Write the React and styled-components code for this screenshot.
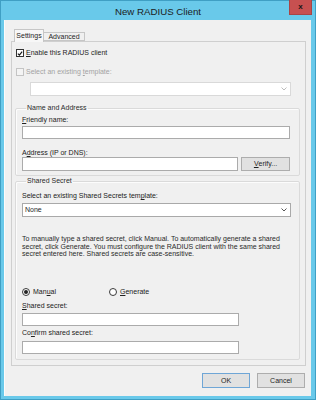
import styled, { createGlobalStyle } from 'styled-components';

const GlobalStyle = createGlobalStyle`
  html, body {
    margin: 0;
    padding: 0;
    background: #ffffff;
  }
  * {
    box-sizing: border-box;
  }
  #root {
    width: 316px;
    height: 400px;
  }
`;

const Chevron = ({ color }) => (
  <svg width="6" height="4" viewBox="0 0 6 4">
    <path d="M0.5 0.5 L3 3 L5.5 0.5" fill="none" stroke={color} strokeWidth="0.9" />
  </svg>
);

const CheckMark = () => (
  <svg width="7" height="7" viewBox="0 0 7 7">
    <path d="M1 3.6 L2.8 5.4 L6 1.2" fill="none" stroke="#1a1a1a" strokeWidth="1.4" />
  </svg>
);

const App = () => {
  return (
    <StyledWindow>
      <GlobalStyle />
      <TitleBar>
        <span />
        <Title>New RADIUS Client</Title>
        <CloseButton>x</CloseButton>
      </TitleBar>
      <Client>
        <TabStrip>
          <Tab $active>Settings</Tab>
          <Tab>Advanced</Tab>
        </TabStrip>
        <Panel>
          <CheckRow $top={7}>
            <CheckBox>
              <CheckMark />
            </CheckBox>
            <Text>
              <u>E</u>nable this RADIUS client
            </Text>
          </CheckRow>
          <CheckRow $top={11} $disabled>
            <CheckBox $disabled />
            <Text>
              Select an existing <u>t</u>emplate:
            </Text>
          </CheckRow>
          <Combo $disabled $left={15} $right={9}>
            <span />
            <Chevron color="#b5b5b5" />
          </Combo>

          <Group $top={8} $bottom={4} $right={9}>
            <legend>Name and Address</legend>
            <Label $top={4}>
              <u>F</u>riendly name:
            </Label>
            <Input $top={2} />
            <Label $top={10}>
              A<u>d</u>dress (IP or DNS):
            </Label>
            <InputRow>
              <Input $height={14} $grow />
              <Button $width={49} $height={14}>
                <u>V</u>erify...
              </Button>
            </InputRow>
          </Group>

          <Group $top={1} $bottom={5} $right={8}>
            <legend>Shared Secret</legend>
            <Label $top={7}>
              Select an existing Shared Secrets tem<u>p</u>late:
            </Label>
            <Combo $top={3}>
              <span>None</span>
              <Chevron color="#444" />
            </Combo>
            <Paragraph>
              To manually type a shared secret, click Manual. To automatically generate a shared
              <br />
              secret, click Generate. You must configure the RADIUS client with the same shared
              <br />
              secret entered here. Shared secrets are case-sensitive.
            </Paragraph>
            <RadioRow>
              <RadioOption $width={87}>
                <Radio $checked />
                <Text>
                  Man<u>u</u>al
                </Text>
              </RadioOption>
              <RadioOption>
                <Radio />
                <Text>
                  <u>G</u>enerate
                </Text>
              </RadioOption>
            </RadioRow>
            <Label $top={6}>
              <u>S</u>hared secret:
            </Label>
            <Input $top={3} $width={217} />
            <Label $top={3}>
              Co<u>n</u>firm shared secret:
            </Label>
            <Input $top={4} $width={217} />
          </Group>
        </Panel>
        <ButtonRow>
          <Button $width={48} $height={15} $default>
            OK
          </Button>
          <Button $width={48} $height={15}>
            Cancel
          </Button>
        </ButtonRow>
      </Client>
    </StyledWindow>
  );
};

const StyledWindow = styled.div`
  width: 316px;
  height: 400px;
  background: #69c9ea;
  border: 1px solid #3f9fc4;
  display: flex;
  flex-direction: column;
  font-family: 'Liberation Sans', Arial, sans-serif;
  font-size: 7px;
  color: #222;
`;

const TitleBar = styled.div`
  height: 19px;
  flex: none;
  display: grid;
  grid-template-columns: 1fr auto 1fr;
  align-items: center;
`;

const Title = styled.div`
  font-size: 9.7px;
  color: #1c1c1c;
  padding-top: 1px;
`;

const CloseButton = styled.div`
  justify-self: end;
  align-self: start;
  margin-top: -1px;
  margin-right: 3px;
  width: 23px;
  height: 15px;
  background: #c75050;
  border: 1px solid #a84545;
  border-top: none;
  display: flex;
  align-items: center;
  justify-content: center;
  font-weight: bold;
  font-size: 8px;
  color: #161616;
  line-height: 1;
`;

const Client = styled.div`
  flex: 1;
  margin: 0 4px 3px 3px;
  background: #f0f0f0;
  border-left: 1px solid #fbfbfb;
  display: flex;
  flex-direction: column;
`;

const TabStrip = styled.div`
  margin: 9px 0 0 9px;
  height: 12px;
  flex: none;
  display: flex;
  align-items: flex-end;
`;

const Tab = styled.div`
  position: relative;
  z-index: 1;
  width: ${p => (p.$active ? '30px' : '41px')};
  height: ${p => (p.$active ? '13px' : '9px')};
  margin-bottom: ${p => (p.$active ? '-1px' : '0')};
  background: ${p => (p.$active ? '#f7f7f7' : '#f0f0f0')};
  border: 1px solid #c6c6c6;
  border-bottom: ${p => (p.$active ? 'none' : '1px solid #c6c6c6')};
  border-left: ${p => (p.$active ? '1px solid #c6c6c6' : 'none')};
  display: flex;
  align-items: center;
  justify-content: center;
  line-height: 8px;
  color: #1e1e1e;
  padding-bottom: ${p => (p.$active ? '1px' : '0')};
`;

const Panel = styled.div`
  margin: 0 5px 0 6px;
  height: 325px;
  flex: none;
  border: 1px solid #cfcfcf;
  background: #f0f0f0;
  padding: 0 5px 0 3px;
  display: flex;
  flex-direction: column;
`;

const CheckRow = styled.div`
  display: flex;
  align-items: center;
  gap: 2px;
  height: 8px;
  flex: none;
  margin: ${p => p.$top}px 0 0 1px;
  color: ${p => (p.$disabled ? '#a3a3a3' : '#1e1e1e')};
`;

const CheckBox = styled.div`
  width: 8px;
  height: 8px;
  border: 1px solid ${p => (p.$disabled ? '#c4c4c4' : '#333')};
  background: ${p => (p.$disabled ? '#f4f4f4' : '#fff')};
  display: flex;
  align-items: center;
  justify-content: center;
`;

const Text = styled.span`
  line-height: 8px;
  white-space: nowrap;
  u {
    text-underline-offset: 1px;
  }
`;

const Combo = styled.div`
  margin: ${p => p.$top || 6}px ${p => p.$right || 0}px 0 ${p => p.$left || 0}px;
  height: 14px;
  flex: none;
  background: #fff;
  border: 1px solid ${p => (p.$disabled ? '#d9d9d9' : '#a9a9a9')};
  display: flex;
  align-items: center;
  justify-content: space-between;
  padding: 0 3px 0 2px;
  line-height: 8px;
  color: #1e1e1e;
`;

const Group = styled.fieldset`
  margin: ${p => p.$top}px 0 0 0;
  padding: 0 ${p => p.$right}px ${p => p.$bottom}px 6px;
  border: 1px solid #dadada;
  border-radius: 2px;
  box-shadow: inset 1px 1px 0 #fcfcfc;
  display: flex;
  flex-direction: column;
  flex: none;
  min-width: 0;

  legend {
    padding: 0 1px;
    margin-left: 4px;
    line-height: 8px;
    color: #2a2a2a;
  }
`;

const Label = styled.div`
  margin-top: ${p => p.$top}px;
  line-height: 8px;
  flex: none;
  color: #222;
  white-space: nowrap;
  u {
    text-underline-offset: 1px;
  }
`;

const Input = styled.div`
  margin-top: ${p => p.$top || 0}px;
  height: ${p => p.$height || 13}px;
  width: ${p => (p.$width ? `${p.$width}px` : 'auto')};
  flex: ${p => (p.$grow ? '1' : 'none')};
  background: #fff;
  border: 1px solid #ababab;
`;

const InputRow = styled.div`
  display: flex;
  flex: none;
  gap: 3px;
`;

const Button = styled.div`
  width: ${p => p.$width}px;
  height: ${p => p.$height}px;
  flex: none;
  background: #e1e1e1;
  border: 1px solid ${p => (p.$default ? '#6fa6d6' : '#adadad')};
  display: flex;
  align-items: center;
  justify-content: center;
  line-height: 8px;
  color: #1e1e1e;
  u {
    text-underline-offset: 1px;
  }
`;

const Paragraph = styled.p`
  margin: 18px 0 0 0;
  font-size: 7px;
  line-height: 7.6px;
  color: #2a2a2a;
  white-space: nowrap;
`;

const RadioRow = styled.div`
  margin-top: 30px;
  display: flex;
  flex: none;
  height: 8px;
  align-items: center;
`;

const RadioOption = styled.div`
  display: flex;
  align-items: center;
  gap: 3px;
  width: ${p => (p.$width ? `${p.$width}px` : 'auto')};
`;

const Radio = styled.div`
  width: 8px;
  height: 8px;
  border-radius: 50%;
  border: 1px solid #3a3a3a;
  background: #fff;
  display: flex;
  align-items: center;
  justify-content: center;
  &::after {
    content: '';
    display: ${p => (p.$checked ? 'block' : 'none')};
    width: 4px;
    height: 4px;
    border-radius: 50%;
    background: #222;
  }
`;

const ButtonRow = styled.div`
  margin-top: 7px;
  padding-right: 6px;
  display: flex;
  justify-content: flex-end;
  gap: 7px;
`;

export default App;
